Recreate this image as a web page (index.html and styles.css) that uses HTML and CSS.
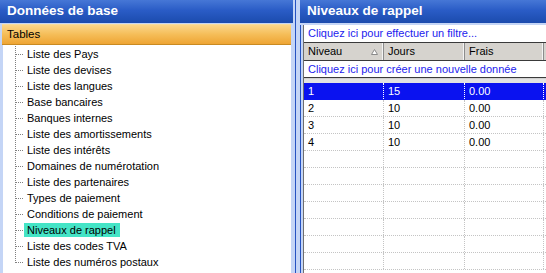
FILE: index.html
```html
<!DOCTYPE html>
<html lang="fr">
<head>
  <meta charset="UTF-8" />
  <title>Niveaux de rappel</title>
  <link rel="stylesheet" href="styles.css">
</head>
<body>
<div class="app">
  <div class="pane left">
    <div class="pane-title">Données de base</div>
    <div class="group">Tables</div>
    <ul class="tree">
      <li><span>Liste des Pays</span></li>
      <li><span>Liste des devises</span></li>
      <li><span>Liste des langues</span></li>
      <li><span>Base bancaires</span></li>
      <li><span>Banques internes</span></li>
      <li><span>Liste des amortissements</span></li>
      <li><span>Liste des intérêts</span></li>
      <li><span>Domaines de numérotation</span></li>
      <li><span>Liste des partenaires</span></li>
      <li><span>Types de paiement</span></li>
      <li><span>Conditions de paiement</span></li>
      <li class="selected"><span>Niveaux de rappel</span></li>
      <li><span>Liste des codes TVA</span></li>
      <li class="last"><span>Liste des numéros postaux</span></li>
    </ul>
  </div>

  <div class="splitter"></div>

  <div class="pane right">
    <div class="pane-title">Niveaux de rappel</div>
    <div class="grid-frame">
      <div class="grid">
        <div class="link-row filter">Cliquez ici pour effectuer un filtre...</div>
        <div class="row head">
          <div class="cell sorted">Niveau
            <svg width="7" height="6" viewBox="0 0 7 6"><polygon points="3.5,0.5 6.5,5.5 0.5,5.5" fill="#fff" stroke="#8a8a8a" stroke-width="1"/></svg>
          </div>
          <div class="cell">Jours</div>
          <div class="cell">Frais</div>
          <div class="cell"></div>
        </div>
        <div class="link-row new">Cliquez ici pour créer une nouvelle donnée</div>
        <div class="strip"></div>

        <div class="row selected"><div class="cell">1</div><div class="cell">15</div><div class="cell">0.00</div><div class="cell"></div></div>
        <div class="row"><div class="cell">2</div><div class="cell">10</div><div class="cell">0.00</div><div class="cell"></div></div>
        <div class="row"><div class="cell">3</div><div class="cell">10</div><div class="cell">0.00</div><div class="cell"></div></div>
        <div class="row"><div class="cell">4</div><div class="cell">10</div><div class="cell">0.00</div><div class="cell"></div></div>
        <div class="row"><div class="cell"></div><div class="cell"></div><div class="cell"></div><div class="cell"></div></div>
        <div class="row"><div class="cell"></div><div class="cell"></div><div class="cell"></div><div class="cell"></div></div>
        <div class="row"><div class="cell"></div><div class="cell"></div><div class="cell"></div><div class="cell"></div></div>
        <div class="row"><div class="cell"></div><div class="cell"></div><div class="cell"></div><div class="cell"></div></div>
        <div class="row"><div class="cell"></div><div class="cell"></div><div class="cell"></div><div class="cell"></div></div>
        <div class="row"><div class="cell"></div><div class="cell"></div><div class="cell"></div><div class="cell"></div></div>
        <div class="row"><div class="cell"></div><div class="cell"></div><div class="cell"></div><div class="cell"></div></div>
      </div>
    </div>
  </div>
</div>
</body>
</html>
```

FILE: styles.css
```css
:root {
  --frame-color: #c4d5f6;
  --frame-line: #2552c2;
  --title-top: #4677d6;
  --title-bottom: #1b4bad;
  --face-color: #d6d3ce;
  --link-color: #2222ee;
  --select-blue: #0a12f0;
  --select-tree: #44e4c6;
  --grid-dots: #c4c4c4;
  --tree-dots: #808080;
}

body {
  margin: 0;
  padding: 0;
  font-family: 'Liberation Sans', Arial, sans-serif;
  font-size: 11px;
  color: #000;
  background-color: var(--frame-color);
}

.app {
  display: flex;
  height: 273px;
  width: 546px;
  overflow: hidden;
}

.pane {
  display: flex;
  flex-direction: column;
}

.pane.left {
  width: 293px;
}

.pane.right {
  flex: 1;
  min-width: 0;
}

.pane-title {
  height: 23px;
  line-height: 22px;
  padding-left: 7px;
  font-size: 13.5px;
  font-weight: bold;
  color: #fff;
  background: linear-gradient(to bottom, var(--title-top) 0%, #2a5cc6 45%, var(--title-bottom) 100%);
  white-space: nowrap;
}

/* left side */

.group {
  margin: 1px 2px 0 2px;
  height: 19px;
  line-height: 19px;
  padding-left: 5px;
  font-size: 11.5px;
  border-top: 1px solid #f7dc9c;
  border-bottom: 1px solid #c98a22;
  background: linear-gradient(to bottom, #fad68a 0%, #f5bd58 50%, #eea534 100%);
}

.tree {
  list-style: none;
  margin: 0 2px 0 3px;
  padding: 1px 0 0 0;
  flex: 1;
  background-color: #fff;
}

.tree li {
  height: 16px;
  line-height: 16px;
  padding-left: 21px;
  white-space: nowrap;
  background-image:
    repeating-linear-gradient(to right, var(--tree-dots) 0 1px, transparent 1px 2px),
    repeating-linear-gradient(to bottom, var(--tree-dots) 0 1px, transparent 1px 2px);
  background-size: 8px 1px, 1px 16px;
  background-position: 13px 8px, 12px 0;
  background-repeat: no-repeat;
}

.tree li.last {
  background-size: 8px 1px, 1px 9px;
}

.tree li span {
  display: inline-block;
  height: 14px;
  line-height: 14px;
  padding: 0 4px 0 3px;
}

.tree li.selected span {
  background-color: var(--select-tree);
}

/* splitter */

.splitter {
  width: 7px;
  background: linear-gradient(to right, var(--frame-color) 2px, var(--frame-line) 2px 3px, var(--frame-color) 3px);
}

/* right side */

.grid-frame {
  flex: 1;
  min-height: 0;
  margin-top: 2px;
  border-left: 1px solid var(--frame-line);
  padding-left: 2px;
}

.grid {
  height: 100%;
  border-left: 1px solid #6e6e6e;
  background-color: #fff;
  overflow: hidden;
}

.link-row {
  height: 16px;
  line-height: 16px;
  padding-left: 4px;
  color: var(--link-color);
  white-space: nowrap;
  border-bottom: 1px solid #3a3a3a;
}

.link-row.filter {
  height: 17px;
}

.strip {
  height: 5px;
  background: linear-gradient(to bottom, #d0d0d0 0 1px, #e2e2e2 1px);
}

.row {
  display: grid;
  grid-template-columns: 80px 81px 79px 1fr;
  height: 17px;
  box-sizing: border-box;
  border-bottom: 1px dotted var(--grid-dots);
}

.row .cell {
  line-height: 16px;
  padding-left: 4px;
  border-right: 1px dotted var(--grid-dots);
  white-space: nowrap;
}

.row .cell:last-child {
  border-right: none;
}

.row.head {
  height: 18px;
  background-color: var(--face-color);
  border-bottom: 1px solid #3a3a3a;
}

.row.head .cell {
  line-height: 17px;
  border-right: 1px solid #8c8c8c;
  box-shadow: inset -1px 0 0 #f4f4f4;
}

.row.head .cell.sorted {
  display: flex;
  align-items: center;
  justify-content: space-between;
  padding-right: 5px;
}

.row.selected {
  background-color: var(--select-blue);
  color: #fff;
  border-bottom-color: var(--select-blue);
}

.row.selected .cell {
  border-right-color: #fff;
}
```
